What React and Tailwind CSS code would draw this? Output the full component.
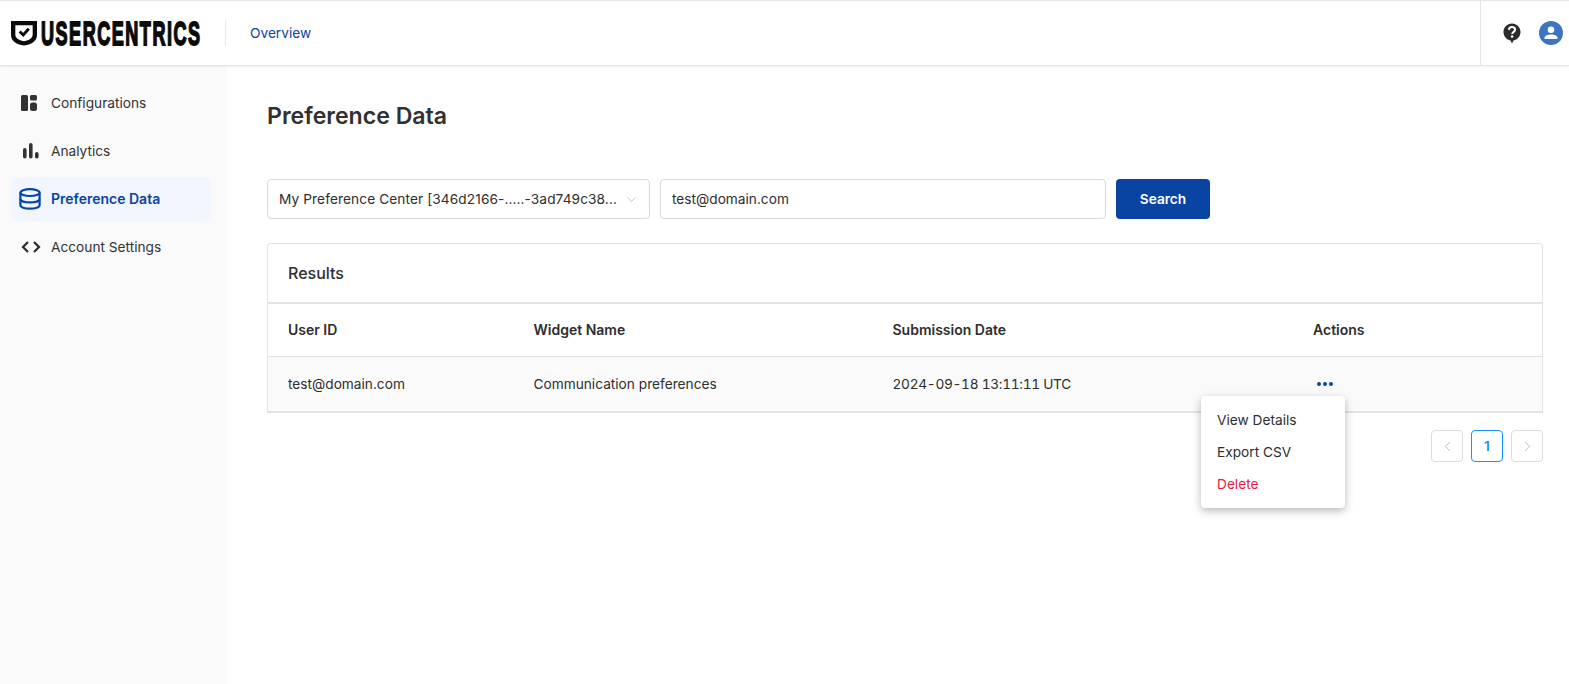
import React from "react";
import { ChevronDown, ChevronLeft, ChevronRight } from "lucide-react";

function Logo() {
  return (
    <div className="flex items-center h-[26px]">
      <svg width="26" height="26" viewBox="0 0 27 26" className="shrink-0">
        <path fillRule="evenodd" fill="#0b0b0b" d="M0 0.5H27V15C27 21 22 24.5 13.5 26C5 24.5 0 21 0 15ZM4.5 5V14.5C4.5 18 7.5 20.3 13.5 21.5C19.5 20.3 22.5 18 22.5 14.5V5Z" />
        <path fill="none" stroke="#0b0b0b" strokeWidth="3" d="M9 11.5L12.7 15L18.5 8.5" />
      </svg>
      <div className="w-[160px] ml-[4px] h-[26px]">
        <span className="block origin-left scale-x-[0.53] font-['Liberation_Sans',sans-serif] font-bold text-[34px] leading-[26px] tracking-[2.9px] text-[#0b0b0b] whitespace-nowrap [-webkit-text-stroke:1.8px_#0b0b0b]">USERCENTRICS</span>
      </div>
    </div>
  );
}

function ConfigIcon() {
  return (
    <svg width="16" height="16" viewBox="0 0 16 16" fill="#333">
      <rect x="0" y="0" width="7" height="16" rx="1.5" />
      <rect x="9" y="0" width="7" height="5.5" rx="1.5" />
      <rect x="9" y="7.5" width="7" height="8.5" rx="2.5" />
    </svg>
  );
}
function BarsIcon() {
  return (
    <svg width="16" height="16" viewBox="0 0 16 16" fill="#333">
      <rect x="0" y="5" width="3.6" height="10.5" rx="1.8" />
      <rect x="6" y="0" width="3.6" height="15.5" rx="1.8" />
      <rect x="12" y="9" width="3.6" height="6.5" rx="1.8" />
    </svg>
  );
}
function DbIcon() {
  return (
    <svg width="22" height="22" viewBox="0 0 22 22" fill="none" stroke="#0a44a3" strokeWidth="2.2">
      <ellipse cx="11" cy="4.6" rx="9.6" ry="3.4" />
      <path d="M1.4 4.6V17.2C1.4 19.2 5.7 20.7 11 20.7S20.6 19.2 20.6 17.2V4.6" />
      <path d="M1.4 11C1.4 13 5.7 14.4 11 14.4S20.6 13 20.6 11" />
    </svg>
  );
}
function CodeIcon() {
  return (
    <svg width="20" height="14" viewBox="0 0 20 14" fill="none" stroke="#2b2b2b" strokeWidth="2.2">
      <path d="M7 2L2 7L7 12" />
      <path d="M13 2L18 7L13 12" />
    </svg>
  );
}
function HelpIcon() {
  return (
    <svg width="18" height="21" viewBox="0 0 18 21">
      <path fill="#2b2b2b" d="M9 0.5C13.8 0.5 17.5 4.2 17.5 9C17.5 13.4 14.3 16.8 10.5 17.4L9 20.5L7.5 17.4C3.7 16.8 0.5 13.4 0.5 9C0.5 4.2 4.2 0.5 9 0.5Z" />
      <path fill="none" stroke="#fff" strokeWidth="2" d="M5.9 6.9C6 5 7.3 4.1 9 4.1C10.8 4.1 12.1 5.1 12.1 6.7C12.1 8.8 9.2 8.9 9.2 11.1" />
      <circle cx="9.1" cy="13.5" r="1.3" fill="#fff" />
    </svg>
  );
}
function UserIcon() {
  return (
    <svg width="24" height="24" viewBox="0 0 24 24">
      <circle cx="12" cy="12" r="12" fill="#3c74c2" />
      <circle cx="12" cy="8.8" r="3.3" fill="#fff" />
      <path fill="#fff" d="M5.5 17C5.5 14.4 9 13.4 12 13.4S18.5 14.4 18.5 17V18H5.5Z" />
    </svg>
  );
}

function NavItem({ icon, label, active, boxClass }) {
  return (
    <div className={"flex items-center h-11 rounded-lg " + (active ? "bg-[#f1f6fe] text-[#0a44a3] font-semibold text-[14px]" : "text-[#333] text-[13.7px]")}>
      <div className={"w-10 flex shrink-0 " + boxClass}>{icon}</div>
      <span>{label}</span>
    </div>
  );
}

export default function App() {
  return (
    <div className="h-[684px] w-[1569px] overflow-hidden bg-white flex flex-col font-['Inter',sans-serif] text-[13.7px] leading-5 text-[#2e2e2e]">
      <header className="relative z-10 h-[66px] shrink-0 flex items-center border-t border-b border-[#e5e5e5] bg-white shadow-[0_1px_3px_rgba(0,0,0,0.06)]">
        <div className="pl-[11px] w-[225px] shrink-0">
          <Logo />
        </div>
        <div className="w-px h-[26px] bg-[#e8e8e8]" />
        <a className="ml-6 text-[#0a44a3]">Overview</a>
        <div className="ml-auto w-[89px] h-full border-l border-[#e5e5e5] flex items-center gap-[18px] pl-[22px]">
          <HelpIcon />
          <UserIcon />
        </div>
      </header>
      <div className="flex flex-1 min-h-0">
        <aside className="w-[227px] shrink-0 bg-[#fafafa] pt-[15px] pl-[11px] pr-4 flex flex-col gap-1">
          <NavItem icon={<ConfigIcon />} label="Configurations" boxClass="pl-[10px]" />
          <NavItem icon={<BarsIcon />} label="Analytics" boxClass="pl-3" />
          <NavItem icon={<DbIcon />} label="Preference Data" active boxClass="pl-2" />
          <NavItem icon={<CodeIcon />} label="Account Settings" boxClass="pl-[10px]" />
        </aside>
        <main className="flex-1 pl-10 pr-[26px] pt-[35px]">
          <h1 className="text-[23.1px] leading-[30px] font-semibold text-[#303030]">Preference Data</h1>
          <div className="flex gap-[10px] mt-[48px]">
            <div className="w-[383px] h-10 rounded border border-[#d9d9d9] flex items-center pl-[11px] pr-[10px] justify-between">
              <span className="whitespace-nowrap tracking-[0.09px]">My Preference Center [346d2166-.....-3ad749c38...</span>
              <ChevronDown size={15} strokeWidth={1.1} color="#aaa" className="shrink-0" />
            </div>
            <div className="w-[446px] h-10 rounded border border-[#d9d9d9] flex items-center pl-[11px]">test@domain.com</div>
            <button className="w-[94px] h-10 rounded bg-[#0a44a3] text-white font-semibold">Search</button>
          </div>
          <section className="mt-6 rounded-t border border-[#e3e3e3] border-b-2">
            <div className="h-[60px] flex items-center px-5 text-[16px] font-medium border-b-2 border-[#e3e3e3]">Results</div>
            <div className="h-[53px] grid grid-cols-[245.5px_359px_420.5px_1fr] items-center px-5 text-[14px] font-semibold border-b border-[#e3e3e3]">
              <span>User ID</span>
              <span>Widget Name</span>
              <span>Submission Date</span>
              <span>Actions</span>
            </div>
            <div className="relative h-[54px] grid grid-cols-[245.5px_359px_420.5px_1fr] items-center px-5 bg-[#fafafa]">
              <span>test@domain.com</span>
              <span>Communication preferences</span>
              <span className="[font-variant-numeric:tabular-nums] tracking-[-0.3px]">2024-09-18 13:11:11 UTC</span>
              <span className="flex gap-[2px] pl-1">
                <i className="w-1 h-1 rounded-full bg-[#0a44a3]" />
                <i className="w-1 h-1 rounded-full bg-[#0a44a3]" />
                <i className="w-1 h-1 rounded-full bg-[#0a44a3]" />
              </span>
              <div className="absolute left-[933px] top-[39px] w-36 h-28 py-2 bg-white rounded shadow-[0_3px_8px_rgba(0,0,0,0.28)] z-20">
                <div className="h-8 flex items-center px-4">View Details</div>
                <div className="h-8 flex items-center px-4">Export CSV</div>
                <div className="h-8 flex items-center px-4 text-[#e8203f]">Delete</div>
              </div>
            </div>
          </section>
          <div className="flex justify-end gap-2 mt-[17px]">
            <div className="w-8 h-8 rounded-sm border border-[#dcdcdc] flex items-center justify-center"><ChevronLeft size={17} strokeWidth={1.1} color="#aaa" /></div>
            <div className="w-8 h-8 rounded-sm border border-[#1890ff] text-[#1890ff] font-semibold flex items-center justify-center">1</div>
            <div className="w-8 h-8 rounded-sm border border-[#dcdcdc] flex items-center justify-center"><ChevronRight size={17} strokeWidth={1.1} color="#aaa" /></div>
          </div>
        </main>
      </div>
    </div>
  );
}
